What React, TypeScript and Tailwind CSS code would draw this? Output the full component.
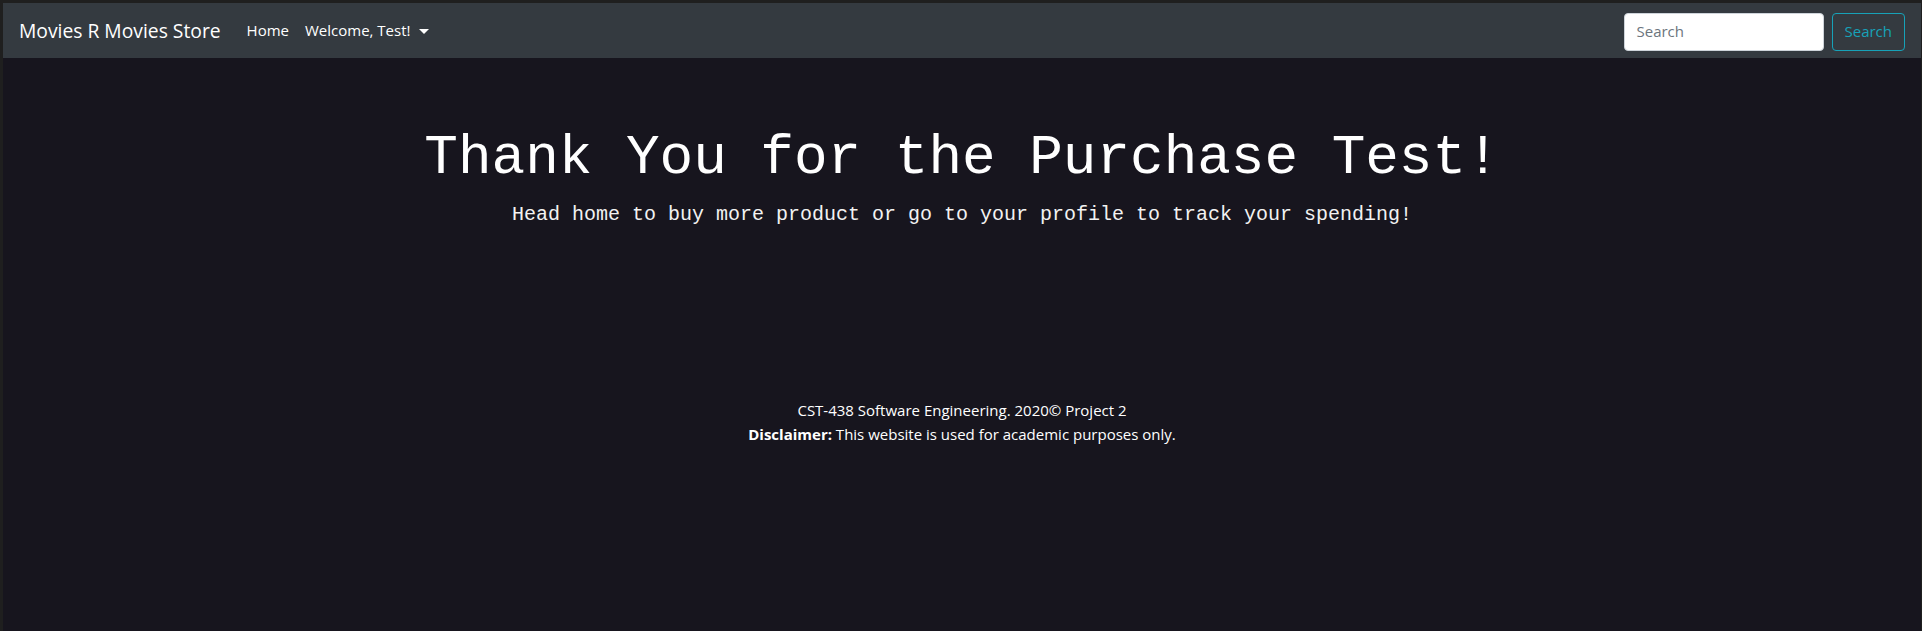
import React from 'react';

const App: React.FC = () => {
  return (
    <div className="min-h-[631px] bg-[#1f1f1f] pt-[3px] pl-[3px] pr-[1px] font-['Open_Sans',sans-serif]">
      <div className="min-h-[628px] bg-[#17151e] flex flex-col">
        {/* Navbar */}
        <nav className="h-[55px] bg-[#343a40] flex items-center px-4">
          <a className="text-white text-[19.3px] leading-[30px] mr-[18px]">Movies R Movies Store</a>
          <a className="text-white text-[15px] px-2">Home</a>
          <a className="text-white text-[15px] px-2 flex items-center gap-2">
            Welcome, Test!
            <span className="inline-block w-0 h-0 border-x-[5px] border-x-transparent border-t-[5px] border-t-white mt-[2px]"></span>
          </a>
          <div className="ml-auto flex items-center gap-2 pt-[2px]">
            <div className="w-[200px] h-[38px] bg-white rounded border border-[#ced4da] flex items-center px-3 text-[15px] text-[#6c757d]">
              Search
            </div>
            <button className="h-[38px] px-3 rounded border border-[#17a2b8] text-[#17a2b8] text-[15px]">
              Search
            </button>
          </div>
        </nav>

        {/* Jumbotron */}
        <div className="pt-[67px] text-center text-white font-['Liberation_Mono',monospace]">
          <h1 className="text-[56px] leading-[67px] font-light mb-2">Thank You for the Purchase Test!</h1>
          <p className="text-[20px] leading-[30px] text-[#f2f2f2]">Head home to buy more product or go to your profile to track your spending!</p>
        </div>

        {/* Footer */}
        <footer className="mt-[168px] text-center text-white text-[15px] leading-[24px]">
          <div>CST-438 Software Engineering. 2020© Project 2</div>
          <div>
            <b>Disclaimer:</b> This website is used for academic purposes only.
          </div>
        </footer>
      </div>
    </div>
  );
};

export default App;
